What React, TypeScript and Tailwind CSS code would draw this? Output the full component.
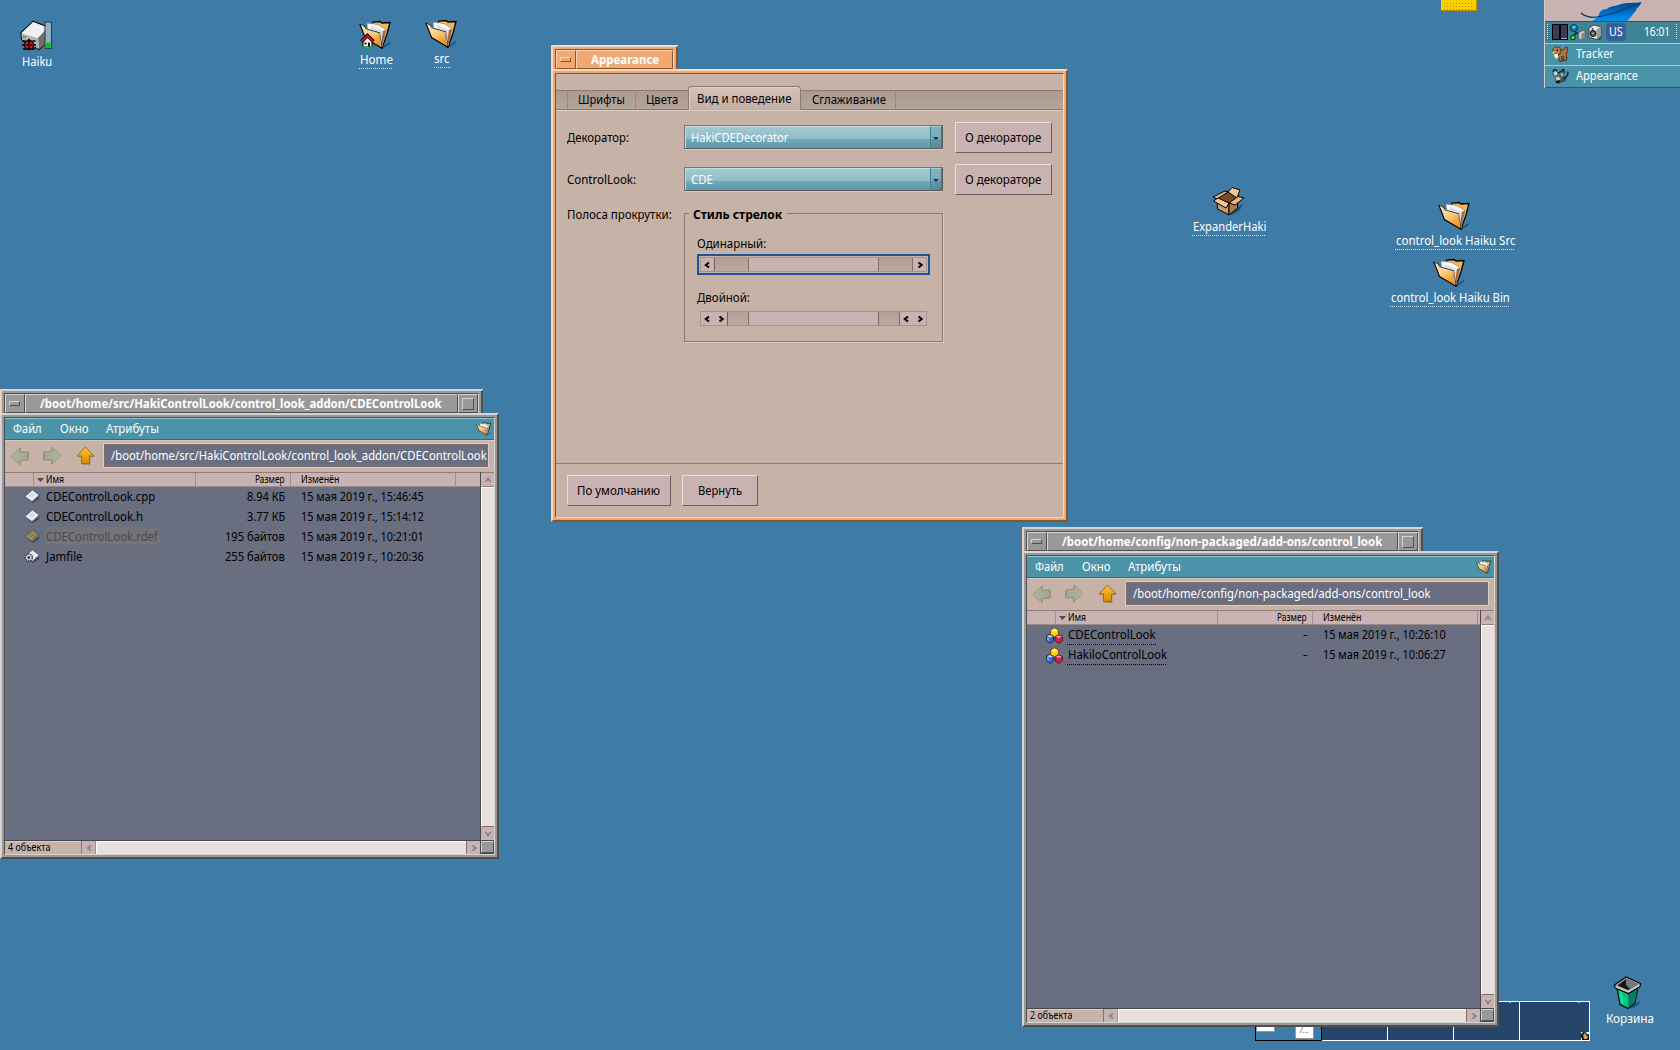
import { useLayoutEffect, useRef, useState } from "react";
import type { ReactNode } from "react";

/* Single line of text condensed horizontally to a known width. */
function Txt({ w, dy = -1, children, className = "" }: { w: number; dy?: number; children: ReactNode; className?: string }) {
  const ref = useRef<HTMLSpanElement>(null);
  const [k, setK] = useState(1);
  useLayoutEffect(() => {
    if (ref.current) setK(w / ref.current.offsetWidth);
  }, [w]);
  return (
    <span className={"block shrink-0 whitespace-nowrap " + className} style={{ width: w }}>
      <span ref={ref} className="inline-block origin-left" style={{ transform: `translateY(${dy}px) scaleX(${k})` }}>
        {children}
      </span>
    </span>
  );
}

function Folder({ className = "h-8 w-9", home = false, id }: { className?: string; home?: boolean; id: string }) {
  return (
    <svg viewBox="0 0 36 32" className={className}>
      <defs>
        <linearGradient id={id} x1="0" y1="0" x2="0.6" y2="1">
          <stop offset="0" stopColor="#ffe8bd" />
          <stop offset="0.5" stopColor="#fdcf85" />
          <stop offset="1" stopColor="#f09413" />
        </linearGradient>
      </defs>
      <path d="M22 28 L32 21 L30 24.5 L24 28.5Z" fill="#24506f" />
      <path d="M13 4 L14 2 L21 1.5 L23 3 L31 2.5 L28 14 L23 28 L12 20Z" fill="#f5b455" stroke="#000" strokeWidth="1.3" />
      <path d="M8 3 L19 4.5 L27 9.5 L23 27 L9 20Z" fill="#f6f6fa" stroke="#777" strokeWidth=".6" />
      <path d="M12 6 L24 11 L21.5 26 L11 20Z" fill="#dcdce4" />
      <path d="M24 11 L27 9.5 L23 27 L21.5 26Z" fill="#a5653c" />
      <path d="M1 4.5 L5 6 L7 9 L20.5 13 L22.5 28 L6.5 18.5 L4 12Z" fill={`url(#${id})`} stroke="#000" strokeWidth="1.1" />
      <path d="M1.8 5 L5 6.5 L7 9.5 L20.5 13.5 L22 27" fill="none" stroke="#ffeccb" strokeWidth=".7" />
      {home && (
        <g>
          <path d="M4 21 L8.5 16 L13 21 V27 H4Z" fill="#fff" stroke="#000" strokeWidth="1" />
          <path d="M2.500 21.500 L8.500 15.500 L14.500 21.500" fill="none" stroke="#000" strokeWidth="3.600" />
          <path d="M2.800 21.300 L8.500 15.700 L14.200 21.300" fill="none" stroke="#e00b0b" strokeWidth="2" />
          <path d="M5.500 22.500h2v2h-2z M9 22.500h2V27H9z" fill="#111" />
          <path d="M3 27.500h11" stroke="#03c80d" strokeWidth="1.600" />
        </g>
      )}
    </svg>
  );
}

function Drive() {
  return (
    <svg viewBox="0 0 34 32" className="h-8 w-[34px]">
      <path d="M1 13 L13 1.5 L28 7 L27 22 L19 29.5 L1.5 19.5Z" fill="#dedede" stroke="#000" strokeWidth="1.2" />
      <path d="M1.5 13 L13 2 L27.500 7.500 L18 18Z" fill="#efefef" />
      <path d="M18 18 L27.500 8 V22 L19 29Z" fill="#6f6f6f" />
      <path d="M1.500 13.500 L18 18.500 L19 29 L2 19.500Z" fill="#b3b3b3" />
      <path d="M3 17h3" stroke="#20b030" strokeWidth="1.5" />
      <ellipse cx="9" cy="25" rx="4.500" ry="4.500" fill="#d81a1a" stroke="#000" strokeWidth="1.300" />
      <path d="M2.500 21h3 M2 25h3 M3 29h3 M12.500 21h3 M13 25h3 M12 29h3 M9 20v10" stroke="#000" strokeWidth="1.500" />
      <path d="M6.500 21 L9 18.500 L11.500 21Z M6.500 24h1.500v2H6.500z M10.500 24H12v2h-1.500z" fill="#000" />
      <rect x="25" y="2" width="6.500" height="26.500" fill="#a9c3d4" fillOpacity=".8" stroke="#33414a" strokeWidth="1.200" />
      <rect x="25.700" y="22.500" width="5" height="5.500" fill="#14ba27" />
    </svg>
  );
}

function BoxIcon() {
  return (
    <svg viewBox="0 0 34 31" className="h-[31px] w-[34px]">
      <path d="M18 28 L31 17 L28 24 L20 29Z" fill="#24506f" />
      <path d="M5 12 L17 17 V29 L5.500 23Z" fill="#cf9766" stroke="#000" />
      <path d="M17 17 L26 10 L25.500 22 L17 29Z" fill="#b47747" stroke="#000" />
      <path d="M5 12 L16 5 L27 10 L17 18Z" fill="#7b4a20" stroke="#000" />
      <path d="M16 6 L20 1.500 L28 4 L25 12Z" fill="#f3c598" stroke="#000" />
      <path d="M1 11 L13 5 L16 6 L5 13Z" fill="#e8b587" stroke="#000" />
      <path d="M1.500 15 L6 12 L17 17 L14 22Z" fill="#f3c598" stroke="#000" />
      <path d="M17 17 L26 10.500 L32 12 L23 19Z" fill="#eab682" stroke="#000" />
    </svg>
  );
}

function Trash() {
  return (
    <svg viewBox="0 0 30 34" className="mr-[5px] h-[34px] w-[30px]">
      <path d="M17 32 L28 24 L25 29 L19 32.500Z" fill="#24506f" />
      <path d="M4 12 L14.500 17 L25 11 L22 27 L15 32.500 L7 28.500Z" fill="#00c47c" stroke="#000" strokeWidth="1.200" />
      <path d="M15 18 L24.500 12 L21.500 26.500 L15.500 31.500Z" fill="#017d68" />
      <path d="M6 15 L9 17 L10.500 28 L8 27Z" fill="#15e493" />
      <path d="M1.500 9 L13 1 L27.500 7.500 L27 10.500 L15.500 17.500 L2.500 12Z" fill="#a8a8a8" stroke="#000" strokeWidth="1.200" />
      <path d="M4.500 9.500 L13 3 L24.500 8 L15 14Z" fill="#151515" />
      <path d="M13 3 L24.500 8 L17 13 L13 9Z" fill="#777" />
      <path d="M2.500 11 L15.500 16 L26.500 9.500" stroke="#dadada" strokeWidth="1" fill="none" />
    </svg>
  );
}

function NavArrow({ dir, id }: { dir: "left" | "right" | "up"; id: string }) {
  const on = dir === "up";
  const rot = dir === "left" ? "rotate(-90 10 10)" : dir === "right" ? "rotate(90 10 10)" : "";
  return (
    <svg viewBox="0 0 20 20" className="h-5 w-5 shrink-0">
      <defs>
        <linearGradient id={id} x1="0" y1="0" x2="0" y2="1">
          <stop offset="0" stopColor={on ? "#ffc13f" : "#b3b59d"} />
          <stop offset="1" stopColor={on ? "#db8c00" : "#a2a792"} />
        </linearGradient>
      </defs>
      <g transform={rot}>
        <path d="M10 2 L19 11 H14.500 V19 H6.500 V11 H2Z" fill="#8e8178" opacity=".7" />
        <path d="M9.500 1 L18 10 H13.500 V17.500 H5.500 V10 H1Z" fill={`url(#${id})`} stroke={on ? "#9c6407" : "#8d9580"} strokeWidth=".9" />
      </g>
    </svg>
  );
}

type FileKind = "code" | "rdef" | "jam" | "addon";
function FileIcon({ kind }: { kind: FileKind }) {
  if (kind === "addon")
    return (
      <svg viewBox="0 0 16 16" className="size-[17px]">
        <path d="M.5 8.500 L3.500 7 L7 8.500 V13 L4 15.500 L.5 13Z" fill="#3667c9" stroke="#111b40" strokeWidth=".7" />
        <path d="M1 8.700 L3.500 7.500 L6.500 8.700 L4 10Z" fill="#b8d0ff" />
        <path d="M1 9.500 L3 10.500 V13.500 L1 12.500Z" fill="#7fa8f0" />
        <path d="M8.500 9 L12 7.500 L15.500 9 V13 L12 15.500 L8.500 13Z" fill="#cc2548" stroke="#3c0b15" strokeWidth=".7" />
        <path d="M9 9 L12 8 L15 9 L12 10.500Z" fill="#ff8fa0" />
        <path d="M4.300 3 L8 .8 L11.700 3 V7 L8 9.300 L4.300 7Z" fill="#ffcc10" stroke="#553f00" strokeWidth=".7" />
        <path d="M5 3 L8 1.500 L11 3 L8 4.600Z" fill="#fff08a" />
      </svg>
    );
  const rdef = kind === "rdef";
  return (
    <svg viewBox="0 0 16 16" className="mr-px mb-0.5 size-4">
      <path d="M1.500 9.500 L8 14 L15.500 8.500 L15 11 L8.500 15Z" fill="#3a4154" />
      <path d="M1 8.500 L8.500 2 L15 7 L8 13.500Z" fill={rdef ? "#9b9560" : "#eef3fa"} stroke={rdef ? "#4b4827" : "#525a70"} strokeWidth=".8" />
      {rdef ? (
        <path d="M4 8.500 L9 4.500 M5.500 10 L11 5.500 M7.500 11.500 L13 7" stroke="#625e35" strokeWidth=".8" />
      ) : (
        <path d="M5 8.500 L9 5 M7 9.500 L10.500 6.500" stroke="#a3b7d6" strokeWidth="1" />
      )}
      {kind === "jam" && (
        <g>
          <circle cx="4.800" cy="9.500" r="3.600" fill="#c9ccd2" stroke="#22262e" strokeWidth="1.200" strokeDasharray="1.700 .8" />
          <circle cx="4.800" cy="9.500" r="1.300" fill="#333" />
        </g>
      )}
    </svg>
  );
}

const tones = {
  orange: {
    tabOuter: "border-[#ffd6b6]",
    light: "border-t-[#ffd6b6] border-l-[#ffd6b6]",
    dark: "border-r-[#86572f] border-b-[#86572f]",
    mid: "border-[#f0a973]",
    inner: "border-t-[#86572f] border-l-[#86572f] border-r-[#ffd6b6] border-b-[#ffd6b6]",
    fill: "bg-[#f0a973]",
  },
  gray: {
    tabOuter: "border-[#f2cdb4]",
    light: "border-t-[#d4d4d4] border-l-[#d4d4d4]",
    dark: "border-r-[#4f4f4f] border-b-[#4f4f4f]",
    mid: "border-[#999999]",
    inner: "border-t-[#4f4f4f] border-l-[#4f4f4f] border-r-[#d4d4d4] border-b-[#d4d4d4]",
    fill: "bg-[#999999]",
  },
};

function Win({ tone, pos, tabW, bodySize, title, titleW, zoom, children }: {
  tone: "orange" | "gray"; pos: string; tabW: string; bodySize: string; title: string; titleW: number; zoom?: boolean; children: ReactNode;
}) {
  const t = tones[tone];
  const cell = `border ${t.light} ${t.dark} ${t.fill} flex items-center justify-center`;
  return (
    <section className={`absolute flex flex-col items-start ${pos}`}>
      <header className={`h-6 border-t border-l ${t.tabOuter} ${tabW}`}>
        <div className={`h-full border-t border-l border-r-2 ${t.light} ${t.dark}`}>
          <div className={`h-full border-x-2 border-t-2 ${t.mid}`}>
            <div className={`flex h-full border-x border-t ${t.inner}`}>
              <div className={`w-5 ${cell}`}>
                <i className={`mr-px mb-px h-[5px] w-[11px] border ${t.light} ${t.dark}`} />
              </div>
              <div className={`flex-1 ${cell}`}>
                <Txt w={titleW} className={`font-bold text-white ${zoom ? "mr-0.5" : ""}`}>{title}</Txt>
              </div>
              {zoom && (
                <div className={`w-5 ${cell}`}>
                  <i className={`size-3 border ${t.light} ${t.dark}`} />
                </div>
              )}
            </div>
          </div>
        </div>
      </header>
      <div className={`border-2 ${t.light} ${t.dark} ${bodySize}`}>
        <div className={`h-full border-2 ${t.mid}`}>
          <div className={`flex h-full flex-col border bg-[#c7b2a8] ${t.inner}`}>{children}</div>
        </div>
      </div>
    </section>
  );
}

function Chevron({ dir, className = "text-[#8f8686]" }: { dir: "left" | "right" | "up" | "down"; className?: string }) {
  const d = { left: "M6 1.500 L2.800 4 L6 6.500", right: "M2.500 1.500 L5.700 4 L2.500 6.500", up: "M1.500 6 L4 2.500 L6.500 6", down: "M1.500 2 L4 5.500 L6.500 2" }[dir];
  return (
    <svg viewBox="0 0 8 8" className={`size-2 shrink-0 ${className}`}>
      <path d={d} fill="none" stroke="currentColor" strokeWidth="2" />
    </svg>
  );
}

interface Row { kind: FileKind; name: string; nameW: number; size: string; sizeW: number; date: string; dim?: boolean; link?: boolean }

function Tracker({ id, path, pathW, rows, status }: { id: string; path: string; pathW: number; rows: Row[]; status: string }) {
  return (
    <>
      <nav className="flex h-[22px] shrink-0 items-center border-t border-b border-t-[#8fc3d1] border-b-[#2f6b7c] bg-[#4b93a9] pr-px pl-2 text-white">
        <Txt w={29} className="mr-[18px]">Файл</Txt>
        <Txt w={29} className="mr-[17px]">Окно</Txt>
        <Txt w={53}>Атрибуты</Txt>
        <Folder id={id + "-menu"} className="ml-auto h-[15px] w-[17px]" />
      </nav>
      <div className="flex h-8 shrink-0 items-center border-t border-t-[#d6c7bf] pr-1.5 pb-0.5 pl-[5px]">
        <NavArrow dir="left" id={id + "-l"} />
        <span className="w-3" />
        <NavArrow dir="right" id={id + "-r"} />
        <span className="w-3.5" />
        <NavArrow dir="up" id={id + "-u"} />
        <div className="ml-2 flex h-[23px] flex-1 items-center overflow-hidden border border-[#7c6e6b] bg-[#696e81] pl-1.5 text-white outline outline-[#dccdc6]">
          <Txt w={pathW}>{path}</Txt>
        </div>
      </div>
      <div className="flex min-h-0 flex-1">
        <div className="flex flex-1 flex-col">
          <div className="flex h-[15px] shrink-0 items-center border-y border-t-[#8c7b76] border-b-[#9b8a88] bg-[#c8b2b2] text-[10px] leading-[13px]">
            <div className="h-full w-[29px] border-r border-[#a08f8f]" />
            <div className="flex h-full w-[162px] items-center border-r border-[#a08f8f] pl-[3px]">
              <svg viewBox="0 0 7 4" className="mr-0.5 h-1 w-[7px]"><path d="M0 0H7L3.500 4Z" fill="#54494a" /></svg>
              <Txt w={18} dy={0}>Имя</Txt>
            </div>
            <div className="flex h-full w-[95px] items-center justify-end border-r border-[#a08f8f] pr-[5px]">
              <Txt w={30} dy={0}>Размер</Txt>
            </div>
            <div className="flex h-full w-[165px] items-center border-r border-[#a08f8f] pl-2.5">
              <Txt w={38} dy={0}>Изменён</Txt>
            </div>
          </div>
          <div className="flex-1 overflow-hidden bg-[#696e81]">
            {rows.map((r) => (
              <div key={r.name} className="flex h-5 items-center">
                <div className="flex w-[41px] justify-end pr-[5px]"><FileIcon kind={r.kind} /></div>
                <div className="relative w-[149px]">
                  {r.dim && <i className="absolute -top-px -left-px h-[18px] bg-[#73747a]" style={{ width: r.nameW + 2 }} />}
                  <Txt w={r.nameW} className={r.dim ? "relative text-[#4a4a4a]" : ""}>{r.name}</Txt>
                  {r.link && <i className="absolute -bottom-px left-[-1px] h-px bg-[repeating-linear-gradient(90deg,#000_0_1px,transparent_1px_2px)]" style={{ width: r.nameW + 1 }} />}
                </div>
                <div className="flex w-[90px] justify-end"><Txt w={r.sizeW}>{r.size}</Txt></div>
                <Txt w={123} className="ml-4">{r.date}</Txt>
              </div>
            ))}
          </div>
        </div>
        <div className="flex w-3.5 flex-col border-l border-[#4a4650] bg-[#c8b2b2]">
          <div className="flex h-3.5 shrink-0 items-center justify-center border-t border-[#8c7b76]"><Chevron dir="up" /></div>
          <div className="flex-1 border-y border-l border-t-[#8c7b76] border-b-[#7d6e6e] border-l-white bg-[#e9e0dd] shadow-[inset_0_1px_0_#fff]" />
          <div className="flex h-[13px] shrink-0 items-center justify-center"><Chevron dir="down" /></div>
        </div>
      </div>
      <div className="flex h-3.5 shrink-0">
        <div className="flex flex-1 border-t border-[#454750]">
          <div className="flex w-[77px] items-center border-r border-[#857673] pl-[3px] text-[10px] leading-[13px] shadow-[inset_0_1px_0_#dccdc6]">
            <Txt w={42} dy={0}>{status}</Txt>
          </div>
          <div className="flex w-3.5 items-center justify-center border-r border-[#a08f8f] bg-[#c8b2b2]"><Chevron dir="left" /></div>
          <div className="flex-1 border-t border-l border-white bg-[#e9e0dd]" />
          <div className="flex w-3.5 items-center justify-center border-l border-[#857673] bg-[#c8b2b2]"><Chevron dir="right" /></div>
        </div>
        <div className="w-3.5 border border-r-0 border-[#454750]">
          <div className="h-full border border-t-[#d4d4d4] border-l-[#d4d4d4] border-r-[#4f4f4f] border-b-[#4f4f4f] bg-[#999]" />
        </div>
      </div>
    </>
  );
}

function Btn({ w, label, className }: { w: number; label: string; className: string }) {
  return (
    <button className={`flex h-[31px] items-center justify-center border border-t-[#e9dfdf] border-l-[#e9dfdf] border-r-[#6d5f60] border-b-[#6d5f60] bg-[#c8b2b2] ${className}`}>
      <Txt w={w} className="mr-px">{label}</Txt>
    </button>
  );
}

function Select({ label, w }: { label: string; w: number }) {
  return (
    <div className="flex h-6 w-[259px] border border-t-[#7d716d] border-l-[#7d716d] border-r-[#5f5b5b] border-b-[#5f5b5b] text-white shadow-[0_1px_0_#d6c7bf]">
      <div className="flex flex-1 items-center border-t border-l border-[#c3dde3] bg-[linear-gradient(#a3c9d1_0,#8fbcc8_12px,#70a9ba_12px,#5c99ad_100%)] pl-[5px]">
        <Txt w={w}>{label}</Txt>
      </div>
      <div className="flex w-3 items-center justify-center border-t border-r border-l border-t-[#a3c9d1] border-r-[#3f7a8c] border-l-[#3e8196] bg-[linear-gradient(#83b2be_0,#7aabb8_12px,#6298a8_12px,#548b9d_100%)]">
        <svg viewBox="0 0 6 3" className="mt-0.5 h-[3px] w-1.5"><path d="M0 0H6L3 3Z" fill="#16343d" /></svg>
      </div>
    </div>
  );
}

function ScrollSample({ double = false }: { double?: boolean }) {
  const track = "border-r border-[#7d6f69] bg-gradient-to-b from-[#b0a096] to-[#baa99f]";
  return (
    <div className="flex h-[15px] w-[227px] border border-[#a5948c]">
      <div className={`flex items-center justify-center border-r border-[#6d5f60] bg-[#c8b2b2] ${double ? "w-[27px] gap-[6px] pr-px" : "w-3.5 pr-px"}`}>
        <Chevron dir="left" className="text-black" />
        {double && <Chevron dir="right" className="text-black" />}
      </div>
      <div className={`${double ? "w-[21px]" : "w-[34px]"} ${track}`} />
      <div className="flex-1 border-r border-[#7d6f69] bg-[#c8b2b2]" />
      <div className={`${double ? "w-[21px]" : "w-[34px]"} ${track}`} />
      <div className={`flex items-center justify-center bg-[#c8b2b2] ${double ? "w-[26px] gap-[6px]" : "w-[13px]"}`}>
        {double && <Chevron dir="left" className="text-black" />}
        <Chevron dir="right" className="text-black" />
      </div>
    </div>
  );
}

function Appearance() {
  return (
    <>
      <div className="flex h-[38px] shrink-0 items-end">
        <div className="mb-[2px] flex h-[20px] w-full border-y border-[#8b7b73] bg-gradient-to-b from-[#ab9b91] to-[#b5a49a] shadow-[0_1px_0_#dccdc4]">
          <div className="w-3 border-r border-[#9a8a81]" />
          <div className="flex w-[68px] items-center border-r border-[#9a8a81] pl-2.5"><Txt w={47}>Шрифты</Txt></div>
          <div className="flex w-[52px] items-center pl-2.5"><Txt w={32}>Цвета</Txt></div>
          <div className="-mt-[5px] flex h-6 w-[113px] items-center rounded-t border border-b-0 border-[#8b7b73] bg-gradient-to-b from-[#d4c3ba] to-[#c3aea4] pl-2 shadow-[inset_1px_1px_0_#e0d2ca]"><Txt w={94}>Вид и поведение</Txt></div>
          <div className="flex w-[95px] items-center border-r border-[#9a8a81] pl-[11px]"><Txt w={74}>Сглаживание</Txt></div>
        </div>
      </div>
      <div className="grid shrink-0 grid-cols-[117px_271px_97px] gap-y-[11px] px-[11px] pt-[10px]">
        <Txt w={62} dy={0} className="mt-1.5">Декоратор:</Txt>
        <div className="pt-[3px]"><Select label="HakiCDEDecorator" w={97} /></div>
        <Btn w={76} label="О декораторе" className="w-[97px]" />
        <Txt w={69} dy={0} className="mt-1.5">ControlLook:</Txt>
        <div className="pt-[3px]"><Select label="CDE" w={22} /></div>
        <Btn w={76} label="О декораторе" className="w-[97px]" />
        <Txt w={105}>Полоса прокрутки:</Txt>
        <fieldset className="mt-[7px] h-[129px] w-[259px] border border-[#8b7b73] px-3 shadow-[1px_1px_0_#d9cac2]">
          <div className="-mt-[9px] -ml-2 flex w-[98px] bg-[#c7b2a8] pl-1"><Txt w={89} dy={0} className="font-bold">Стиль стрелок</Txt></div>
          <Txt w={69} className="mt-3">Одинарный:</Txt>
          <div className="mt-px w-[233px] border-2 border-[#1d5493] p-px"><ScrollSample /></div>
          <Txt w={53} className="mt-3.5">Двойной:</Txt>
          <div className="mt-1 px-[3px]"><ScrollSample double /></div>
        </fieldset>
      </div>
      <div className="mt-auto flex h-[54px] gap-[11px] border-t border-[#8b7b73] px-[11px] pt-[11px]">
        <Btn w={83} label="По умолчанию" className="w-[104px]" />
        <Btn w={44} label="Вернуть" className="w-[76px]" />
      </div>
    </>
  );
}

function DeskIcon({ pos, icon, label, w, link = false, gap = "" }: { pos: string; icon: ReactNode; label: string; w: number; link?: boolean; gap?: string }) {
  return (
    <div className={`absolute flex flex-col items-center text-white ${pos}`}>
      {icon}
      <Txt w={w} className={gap}>{label}</Txt>
      {link && <i className="-mt-px h-px bg-[repeating-linear-gradient(90deg,#dbe9f3_0_1px,transparent_1px_2px)]" style={{ width: w + 1 }} />}
    </div>
  );
}

function Deskbar() {
  return (
    <aside className="absolute top-0 right-0 w-[136px] border-l border-[#d6cccc] text-white">
      <div className="flex h-[22px] items-end justify-end border-b border-[#3b4d55] bg-[#c8b2b2] pr-9">
        <svg viewBox="0 0 64 20" className="h-5 w-16">
          <defs><linearGradient id="feather" x1="0" y1="0" x2="0" y2="1"><stop offset="0" stopColor="#00478c" /><stop offset="1" stopColor="#0090f5" /></linearGradient></defs>
          <path d="M12 20 C16 17.500 17 16.500 18.500 15 C19 11 22 8 27 8 C31 4.500 37 5 40 3.500 C47 1 54 2.500 61.500 1 C60 6 55 8 56 10 C53 12 52 16 47 20Z" fill="url(#feather)" />
          <path d="M1 12 C6 16.500 13 17 20 15.500 C34 12.500 46 8 55 4" stroke="#073a78" strokeWidth="1.200" fill="none" />
        </svg>
      </div>
      <div className="flex h-[21px] items-center bg-[#418396] pb-px pl-[2px]">
        <i className="mr-1 h-4 w-px bg-[repeating-linear-gradient(#cfe3e8_0_1px,transparent_1px_2px)]" />
        <span className="flex h-4 w-4 bg-black p-px"><i className="mr-0.5 w-[6px] bg-[#3b3b58]" /><i className="w-[6px] border-b border-[#b99be0] bg-[#3b3b58]" /></span>
        <svg viewBox="0 0 16 17" className="ml-0.5 h-[17px] w-4">
          <path d="M5 5 L6 9 L3 13 M6 9 L11 10" stroke="#061c26" strokeWidth="1.300" fill="none" />
          <circle cx="4" cy="4" r="3.600" fill="#1273b5" stroke="#0b2c40" strokeWidth=".8" /><path d="M2 3 L4 1.500 L6 3 L4 5Z" fill="#63d3c4" />
          <circle cx="3" cy="13.500" r="2.300" fill="#32ec2a" stroke="#062b07" />
          <path d="M8.500 8.500 L13 6.500 L15.500 7.500 V13 L11 16 L8.500 14Z" fill="#c9c9c9" stroke="#555" strokeWidth=".7" /><path d="M11.500 10 L15 8V13L11.500 15.500Z" fill="#888" />
        </svg>
        <svg viewBox="0 0 15 17" className="ml-0.5 h-[17px] w-[15px]">
          <path d="M9 16 L14.500 12 L12 16Z" fill="#23475a" />
          <path d="M1 4 L6 1 L13 3 V12 L8.500 15.500 L1 13Z" fill="#e8e8e8" stroke="#333" strokeWidth=".8" /><path d="M8.500 5.500 L13 3V12L8.500 15.500Z" fill="#9a9a9a" />
          <circle cx="5" cy="9.500" r="3" fill="#555" stroke="#111" /><circle cx="5" cy="9.500" r="1" fill="#bbb" /><circle cx="4.500" cy="5" r="1" fill="#444" />
        </svg>
        <span className="ml-[3px] flex h-[18px] w-5 items-center justify-center rounded bg-[#32619a]"><Txt w={14}>US</Txt></span>
        <Txt w={26} className="ml-[18px]">16:01</Txt>
        <i className="ml-1.5 h-4 w-px bg-[repeating-linear-gradient(#cfe3e8_0_1px,transparent_1px_2px)]" />
      </div>
      <div className="flex h-[22px] items-center border-t border-[#a9ced8] bg-[#4b93a9] pb-0.5 pl-[7px]">
        <svg viewBox="0 0 17 16" className="h-4 w-[17px]">
          <path d="M7 13 L16 11 L14 15 L9 15.500Z" fill="#28596a" />
          <path d="M5 5 L12 3.500 L13.500 1 L15.500 1.500 L15 6 L14.500 9 V14.500 H12 L11.500 10.500 L9.500 10.500 L10 15.500 H7.500 L6.500 10Z" fill="#a9743f" stroke="#4a2b10" strokeWidth=".8" />
          <path d="M1 2.500 L3.500 .8 L8 1.500 L9 5 L7.500 8.500 L3 8 L1 6Z" fill="#b57f49" stroke="#4a2b10" strokeWidth=".8" />
          <path d="M2 8.500 L5.500 7.500 L6.500 11 L4.500 13 L2.500 11Z" fill="#f2efe8" /><path d="M.5 5.500h2.500v2H.5z" fill="#f4c814" /><path d="M4.500 3.500h1.500V5H4.500z" fill="#111" />
        </svg>
        <Txt w={38} className="ml-[7px]">Tracker</Txt>
      </div>
      <div className="flex h-[23px] items-center border-t border-b border-t-[#a9ced8] border-b-[#39525c] bg-[#4b93a9] pb-0.5 pl-[7px]">
        <svg viewBox="0 0 17 16" className="h-4 w-[17px]">
          <path d="M7 12 L15 9 L14 13 L8 15Z" fill="#28596a" />
          <path d="M1 4 C1 1 4 1 5 3 M6 5 L10 3 M10 3.500 C10 0 12.500 1 12 5 M10.500 10 C14 11 17 6 15.500 3.500" stroke="#0c1216" strokeWidth="1.300" fill="none" />
          <ellipse cx="3.500" cy="5.500" rx="2.500" ry="2.700" fill="#bcd4e0" stroke="#1a2c36" strokeWidth=".8" /><ellipse cx="10" cy="6.500" rx="2.200" ry="2.700" fill="#7ba9bd" stroke="#1a2c36" strokeWidth=".8" />
          <path d="M3 9 L7 8 L9 11 L7 13.500 L4 13Z" fill="#ebb9a5" stroke="#472b24" strokeWidth=".6" /><path d="M3.500 13 L8 12 L7.500 15.500 L4 15Z" fill="#111" />
        </svg>
        <Txt w={62} className="ml-[7px]">Appearance</Txt>
      </div>
    </aside>
  );
}

function Workspaces() {
  return (
    <div className="absolute top-[1001px] left-[1255px] flex h-10 w-[335px]">
      <div className="relative w-[67px] border border-black">
        <i className="absolute bottom-2 left-0 h-5 w-[19px] border border-[#999] bg-white" />
        <span className="absolute bottom-[1px] left-[39px] h-7 w-[19px] border border-[#999] bg-white pt-3 text-center text-[8px] leading-3 text-[#777] italic">/...</span>
      </div>
      <div className="w-[66px] border-y border-r border-white bg-[#254669]" />
      <div className="w-[66px] border-y border-r border-white bg-[#254669]" />
      <div className="w-[66px] border-y border-r border-white bg-[#254669]"><i className="ml-[55px] block h-px w-0.5 bg-[#aaa]" /></div>
      <div className="flex w-[70px] flex-col items-end border-y border-r border-white bg-[#254669]">
        <i className="mr-[9px] h-px w-0.5 bg-[#aaa]" />
        <svg viewBox="0 0 8 8" className="mt-auto size-2"><path d="M0 0h2l1 1h2l1 2h2v5H1L0 5Z" fill="#111" /><path d="M2 3l2-2 2 3 1 0-1 3H3Z" fill="#d59d62" /><path d="M0 0h1.500v1.500H0z M5 0h3v2H6z M0 6h1v2H0z" fill="#fff" /></svg>
      </div>
    </div>
  );
}

const srcRows: Row[] = [
  { kind: "code", name: "CDEControlLook.cpp", nameW: 109, size: "8.94 КБ", sizeW: 38, date: "15 мая 2019 г., 15:46:45" },
  { kind: "code", name: "CDEControlLook.h", nameW: 97, size: "3.77 КБ", sizeW: 38, date: "15 мая 2019 г., 15:14:12" },
  { kind: "rdef", name: "CDEControlLook.rdef", nameW: 112, size: "195 байтов", sizeW: 60, date: "15 мая 2019 г., 10:21:01", dim: true },
  { kind: "jam", name: "Jamfile", nameW: 37, size: "255 байтов", sizeW: 60, date: "15 мая 2019 г., 10:20:36" },
];
const addonRows: Row[] = [
  { kind: "addon", name: "CDEControlLook", nameW: 88, size: "-", sizeW: 4, date: "15 мая 2019 г., 10:26:10", link: true },
  { kind: "addon", name: "HakiloControlLook", nameW: 99, size: "-", sizeW: 4, date: "15 мая 2019 г., 10:06:27", link: true },
];

export default function App() {
  const folder = "mt-px -mb-px ml-0.5 h-8 w-9";
  return (
    <main className="relative h-[1050px] w-[1680px] overflow-hidden bg-[#3f7ba7] font-['Noto_Sans',sans-serif] text-[13px] leading-[18px] text-black">
      <DeskIcon pos="left-[20px] top-[20px]" icon={<Drive />} label="Haiku" w={30} gap="mt-px" />
      <DeskIcon pos="left-[357px] top-[19px]" icon={<Folder id="f-home" home className={folder} />} label="Home" w={33} link />
      <DeskIcon pos="left-[423px] top-[18px]" icon={<Folder id="f-src" className={folder} />} label="src" w={16} link />
      <DeskIcon pos="left-[1192px] top-[186px]" icon={<BoxIcon />} label="ExpanderHaki" w={73} link gap="mt-px" />
      <DeskIcon pos="left-[1395px] top-[200px]" icon={<Folder id="f-cls" className={folder} />} label="control_look Haiku Src" w={119} link />
      <DeskIcon pos="left-[1390px] top-[257px]" icon={<Folder id="f-clb" className={folder} />} label="control_look Haiku Bin" w={119} link />
      <DeskIcon pos="left-[1606px] top-[976px]" icon={<Trash />} label="Корзина" w={48} />
      <div className="absolute top-0 left-[1441px] h-[11px] w-9 border-r border-b border-[#b98f00] bg-[#ffd000] p-0.5">
        <i className="block h-2 bg-[radial-gradient(#b98500_0.7px,transparent_0.9px)] bg-size-[3px_3px]" />
      </div>
      <Workspaces />
      <Deskbar />
      <Win tone="orange" pos="left-[551px] top-[45px]" tabW="w-[127px]" bodySize="w-[517px] h-[453px]" title="Appearance" titleW={68}>
        <Appearance />
      </Win>
      <Win tone="gray" pos="left-0 top-[389px]" tabW="w-[483px]" bodySize="w-[499px] h-[446px]" title="/boot/home/src/HakiControlLook/control_look_addon/CDEControlLook" titleW={402} zoom>
        <Tracker id="a" path="/boot/home/src/HakiControlLook/control_look_addon/CDEControlLook" pathW={376} rows={srcRows} status="4 объекта" />
      </Win>
      <Win tone="gray" pos="left-[1022px] top-[527px]" tabW="w-[401px]" bodySize="w-[477px] h-[476px]" title="/boot/home/config/non-packaged/add-ons/control_look" titleW={320} zoom>
        <Tracker id="b" path="/boot/home/config/non-packaged/add-ons/control_look" pathW={298} rows={addonRows} status="2 объекта" />
      </Win>
    </main>
  );
}
